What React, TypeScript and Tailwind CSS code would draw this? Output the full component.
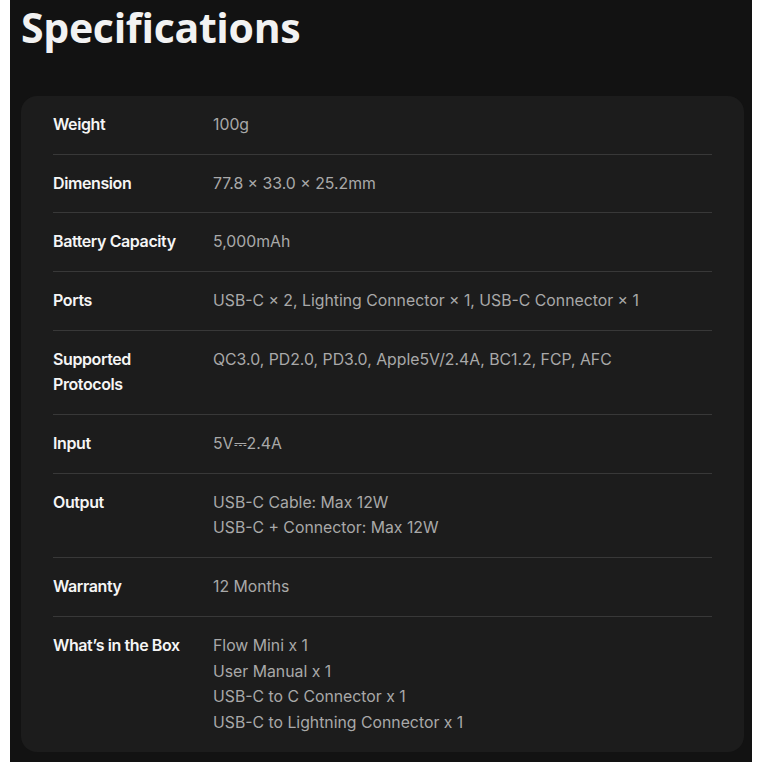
const specs: { label: string; lines: string[] }[] = [
  { label: "Weight", lines: ["100g"] },
  { label: "Dimension", lines: ["77.8 × 33.0 × 25.2mm"] },
  { label: "Battery Capacity", lines: ["5,000mAh"] },
  { label: "Ports", lines: ["USB-C × 2, Lighting Connector × 1, USB-C Connector × 1"] },
  { label: "Supported Protocols", lines: ["QC3.0, PD2.0, PD3.0, Apple5V/2.4A, BC1.2, FCP, AFC"] },
  { label: "Input", lines: ["5V⎓2.4A"] },
  { label: "Output", lines: ["USB-C Cable: Max 12W", "USB-C + Connector: Max 12W"] },
  { label: "Warranty", lines: ["12 Months"] },
  {
    label: "What’s in the Box",
    lines: [
      "Flow Mini x 1",
      "User Manual x 1",
      "USB-C to C Connector x 1",
      "USB-C to Lightning Connector x 1",
    ],
  },
];

export default function App() {
  return (
    <div className="min-h-screen bg-white px-[10px] font-['Inter',sans-serif]">
      <div className="min-h-[762px] bg-[#121212] pl-[11px] pr-[8px] pb-[11px]">
        {/* heading */}
        <h1 className="h-[96px] pt-[1px] font-['Open_Sans',sans-serif] text-[41px] font-bold leading-[52px] tracking-[-0.3px] text-[#f2f2f2]">
          Specifications
        </h1>

        {/* spec card */}
        <div className="rounded-2xl bg-[#1c1c1c] px-8">
          {specs.map((s, i) => (
            <div
              key={s.label}
              className={
                "flex py-4 text-[16px] leading-[25.6px] " +
                (i < specs.length - 1 ? "border-b border-[#383838]" : "")
              }
            >
              <div className="w-[160px] shrink-0 pr-4 font-semibold tracking-[-0.4px] text-[#f5f5f5]">
                {s.label}
              </div>
              <div className="flex flex-col text-[15.8px] leading-[25.7px] text-[#a9a9a9]">
                {s.lines.map((l) => (
                  <span key={l}>{l}</span>
                ))}
              </div>
            </div>
          ))}
        </div>
      </div>
    </div>
  );
}
